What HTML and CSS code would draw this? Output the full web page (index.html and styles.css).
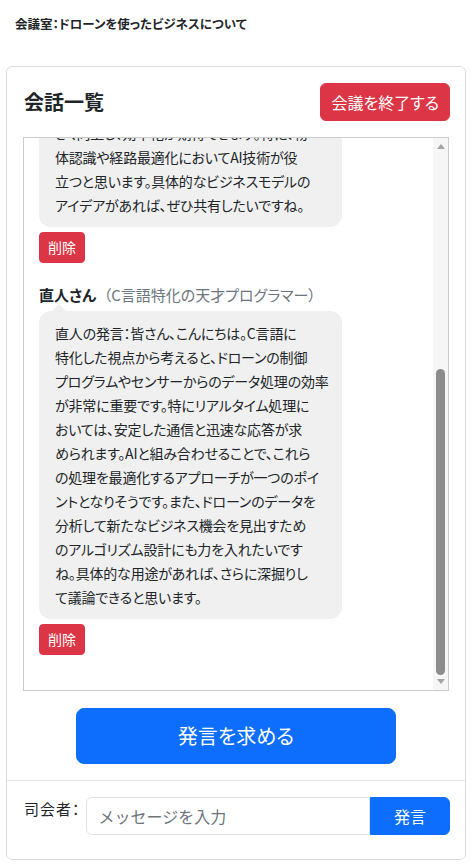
FILE: index.html
```html
<!DOCTYPE html>
<html lang="ja">
<head>
    <meta charset="utf-8">
    <title>会議室</title>
    <link rel="stylesheet" href="styles.css">
</head>
<body>
<div class="page">
    <h1 class="room-title">会議室：ドローンを使ったビジネスについて</h1>

    <div class="meeting-card">
        <div class="meeting-header">
            <h2 class="meeting-heading">会話一覧</h2>
            <button class="btn btn-danger end-button">会議を終了する</button>
        </div>

        <div class="meeting-body">
            <div class="chat-frame">
                <div class="chat-log">
                    <div class="message">
                        <div class="speaker">健一さん <span class="role">（ドローンビジネスの経営者）</span></div>
                        <div class="bubble">健一の発言：本日はドローンを使ったビジネ<br>スについて議論しましょう。物流、農業、<br>インフラ点検、空撮など、ドローンの活用<br>分野は年々広がっています。新しい市場を<br>切り開くチャンスだと考えています。ぜひ<br>皆さんの意見をお聞かせください。</div>
                        <button class="btn btn-danger btn-sm delete-button">削除</button>
                    </div>

                    <div class="message">
                        <div class="speaker">美咲さん <span class="role">（AI研究者）</span></div>
                        <div class="bubble">美咲の発言：こんにちは。AIの専門家とし<br>て考えると、ドローンにAIを組み合わせる<br>ことで、自律飛行や画像解析の精度が大<br>きく向上し、効率化が期待できます。特に、物<br>体認識や経路最適化においてAI技術が役<br>立つと思います。具体的なビジネスモデルの<br>アイデアがあれば、ぜひ共有したいですね。</div>
                        <button class="btn btn-danger btn-sm delete-button">削除</button>
                    </div>

                    <div class="message">
                        <div class="speaker">直人さん <span class="role">（C言語特化の天才プログラマー）</span></div>
                        <div class="bubble">直人の発言：皆さん、こんにちは。C言語に<br>特化した視点から考えると、ドローンの制御<br>プログラムやセンサーからのデータ処理の効率<br>が非常に重要です。特にリアルタイム処理に<br>おいては、安定した通信と迅速な応答が求<br>められます。AIと組み合わせることで、これら<br>の処理を最適化するアプローチが一つのポイ<br>ントとなりそうです。また、ドローンのデータを<br>分析して新たなビジネス機会を見出すため<br>のアルゴリズム設計にも力を入れたいです<br>ね。具体的な用途があれば、さらに深掘りし<br>て議論できると思います。</div>
                        <button class="btn btn-danger btn-sm delete-button">削除</button>
                    </div>
                </div>

                <div class="scrollbar">
                    <span class="scroll-arrow up"></span>
                    <div class="scroll-track"><div class="scroll-thumb"></div></div>
                    <span class="scroll-arrow down"></span>
                </div>
            </div>

            <button class="btn btn-primary request-button">発言を求める</button>
        </div>

        <div class="meeting-footer">
            <label class="host-label" for="host-input">司会者：</label>
            <div class="input-group">
                <input id="host-input" class="message-input" type="text" placeholder="メッセージを入力">
                <button class="btn btn-primary send-button">発言</button>
            </div>
        </div>
    </div>
</div>

<script>
    const chatLog = document.querySelector('.chat-log');
    const track = document.querySelector('.scroll-track');
    const thumb = document.querySelector('.scroll-thumb');

    function updateScrollbar() {
        const trackHeight = track.clientHeight;
        const ratio = chatLog.clientHeight / chatLog.scrollHeight;
        thumb.style.height = Math.round(trackHeight * ratio) + 'px';
        thumb.style.marginTop = Math.round(trackHeight * chatLog.scrollTop / chatLog.scrollHeight) + 'px';
    }

    chatLog.scrollTop = chatLog.scrollHeight;
    chatLog.addEventListener('scroll', updateScrollbar);
    updateScrollbar();
</script>
</body>
</html>
```

FILE: styles.css
```css
body {
    margin: 0;
    background-color: #ffffff;
    color: #212529;
    font-family: "Noto Sans CJK JP", "Noto Sans", sans-serif;
    font-feature-settings: "palt";
}

.page {
    padding: 0 6px;
}

.room-title {
    margin: 14px 0 32px 9px;
    font-size: 12.5px;
    line-height: 20px;
    font-weight: bold;
}

.meeting-card {
    border: 1px solid #dcdcdc;
    border-radius: 6px;
    background-color: #ffffff;
}

.meeting-header {
    display: flex;
    justify-content: space-between;
    align-items: center;
    padding: 16px 15px 16px 17px;
}

.meeting-heading {
    margin: 0;
    font-size: 20px;
    line-height: 30px;
    font-weight: bold;
}

/* ボタン共通 */
.btn {
    border: 1px solid transparent;
    border-radius: 6px;
    padding: 6px 12px;
    font-family: inherit;
    font-feature-settings: "palt";
    font-size: 16px;
    line-height: 24px;
    color: #ffffff;
    cursor: pointer;
}

.btn-danger {
    background-color: #dc3545;
    border-color: #dc3545;
}

.btn-primary {
    background-color: #0d6efd;
    border-color: #0d6efd;
}

.btn-sm {
    padding: 4px 8px;
    font-size: 14px;
    line-height: 21px;
    border-radius: 4px;
}

.end-button {
    padding: 6px 10px;
}

.meeting-body {
    display: flex;
    flex-direction: column;
    align-items: center;
    padding: 0 16px 16px;
}

.chat-frame {
    position: relative;
    box-sizing: border-box;
    width: 100%;
    height: 554px;
    border: 1px solid #cccccc;
}

.chat-log {
    box-sizing: border-box;
    height: 100%;
    overflow-y: auto;
    padding: 15px 30px 15px 15px;
}

/* スクロールバー（表示用） */
.scrollbar {
    position: absolute;
    top: 0;
    right: 0;
    bottom: 0;
    width: 15px;
    display: flex;
    flex-direction: column;
    align-items: center;
    background-color: #f6f6f6;
}

.scroll-arrow {
    flex: none;
    width: 0;
    height: 0;
    border-left: 4px solid transparent;
    border-right: 4px solid transparent;
}

.scroll-arrow.up {
    margin: 6px 0 4px;
    border-bottom: 5px solid #a3a3a3;
}

.scroll-arrow.down {
    margin: 4px 0 6px;
    border-top: 5px solid #a3a3a3;
}

.scroll-track {
    flex: 1;
    width: 100%;
    display: flex;
    flex-direction: column;
    align-items: center;
}

.scroll-thumb {
    width: 9px;
    border-radius: 5px;
    background-color: #8c8c8c;
}

.message {
    margin-bottom: 20px;
}

.speaker {
    font-size: 15px;
    line-height: 24px;
    font-weight: bold;
}

.role {
    margin-left: 4px;
    font-weight: normal;
    color: #6c757d;
}

.bubble {
    position: relative;
    box-sizing: border-box;
    width: 80%;
    margin-top: 4px;
    padding: 10px 12px 10px 16px;
    border-radius: 12px;
    background-color: #f0f0f0;
    font-size: 14px;
    line-height: 24px;
    letter-spacing: -0.2px;
}

/* 吹き出しのしっぽ */
.bubble::before {
    content: "";
    position: absolute;
    top: -7px;
    left: 13px;
    border-left: 7px solid transparent;
    border-right: 7px solid transparent;
    border-bottom: 7px solid #f0f0f0;
}

.delete-button {
    display: block;
    margin-top: 5px;
}

.request-button {
    width: 75%;
    margin-top: 17px;
    padding: 12px 16px;
    font-size: 20px;
    line-height: 30px;
    border-radius: 8px;
}

.meeting-footer {
    display: flex;
    align-items: flex-start;
    gap: 5px;
    padding: 16px 15px 24px 17px;
    border-top: 1px solid #e5e5e5;
}

.host-label {
    font-size: 15px;
    line-height: 24px;
    letter-spacing: 1px;
    white-space: nowrap;
}

.input-group {
    display: flex;
    flex: 1;
}

.message-input {
    flex: 1;
    min-width: 0;
    padding: 6px 12px;
    border: 1px solid #dee2e6;
    border-radius: 6px 0 0 6px;
    font-family: inherit;
    font-size: 16px;
    line-height: 23px;
    color: #212529;
}

.message-input::placeholder {
    color: #6c757d;
}

.send-button {
    width: 80px;
    border-radius: 0 6px 6px 0;
}
```
